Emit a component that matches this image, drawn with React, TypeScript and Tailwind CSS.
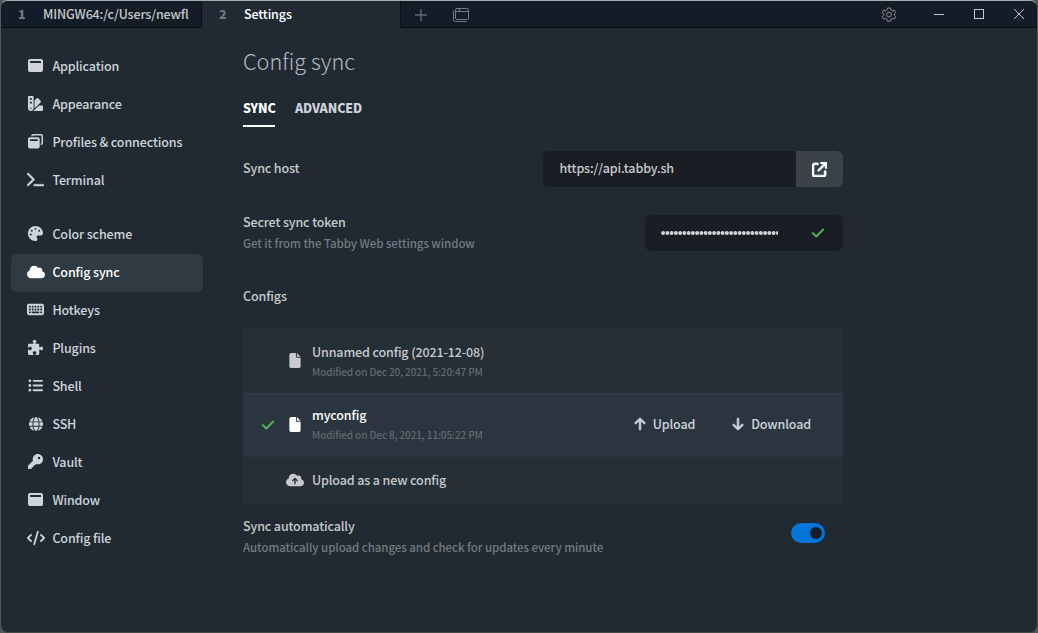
import type { ReactNode } from 'react';
import type { IconType } from 'react-icons';
import {
  FaArrowDown, FaArrowUp, FaCheck, FaCloud, FaCloudArrowUp, FaCode, FaFile, FaGlobe, FaKey, FaKeyboard,
  FaListUl, FaPalette, FaPuzzlePiece, FaSwatchbook, FaTerminal, FaArrowUpRightFromSquare,
} from 'react-icons/fa6';

const WindowIcon: IconType = ({ size = 15 }) => (
  <svg width={size} height={size} viewBox="0 0 15 15" fill="currentColor">
    <path fillRule="evenodd" d="M1.9 1h11.2A1.9 1.9 0 0 1 15 2.9v9.2a1.9 1.9 0 0 1-1.9 1.9H1.9A1.9 1.9 0 0 1 0 12.1V2.9A1.9 1.9 0 0 1 1.9 1zM2.5 3a.5.5 0 0 0-.5.5V5h11V3.5a.5.5 0 0 0-.5-.5z" />
  </svg>
);

const WindowsIcon: IconType = ({ size = 15 }) => (
  <svg width={size} height={size} viewBox="0 0 15 15" fill="currentColor">
    <path d="M5.2 0H13a2 2 0 0 1 2 2v7a2 2 0 0 1-2 2h-.3V9.5h.3a.5.5 0 0 0 .5-.5V2a.5.5 0 0 0-.5-.5H5.2a.5.5 0 0 0-.5.5v.2H3.2V2a2 2 0 0 1 2-2z" />
    <path fillRule="evenodd" d="M1.9 3.2h7.9a1.9 1.9 0 0 1 1.9 1.9v7.5a1.9 1.9 0 0 1-1.9 1.9H1.9A1.9 1.9 0 0 1 0 12.6V5.1a1.9 1.9 0 0 1 1.9-1.9zM2 5.2v1.7h7.7V5.2z" />
  </svg>
);

type Item = { label: string; icon: IconType; size: number; active?: boolean };

const general: Item[] = [
  { label: 'Application', icon: WindowIcon, size: 15 },
  { label: 'Appearance', icon: FaSwatchbook, size: 15 },
  { label: 'Profiles & connections', icon: WindowsIcon, size: 15 },
  { label: 'Terminal', icon: FaTerminal, size: 17 },
];

const tools: Item[] = [
  { label: 'Color scheme', icon: FaPalette, size: 15 },
  { label: 'Config sync', icon: FaCloud, size: 18, active: true },
  { label: 'Hotkeys', icon: FaKeyboard, size: 17 },
  { label: 'Plugins', icon: FaPuzzlePiece, size: 15 },
  { label: 'Shell', icon: FaListUl, size: 15 },
  { label: 'SSH', icon: FaGlobe, size: 14 },
  { label: 'Vault', icon: FaKey, size: 15 },
  { label: 'Window', icon: WindowIcon, size: 15 },
  { label: 'Config file', icon: FaCode, size: 18 },
];

function NavItem({ label, icon: Icon, size, active }: Item) {
  return (
    <a className={`flex h-[38px] w-48 items-center rounded-md pb-[3px] pl-4 ${active ? 'bg-[#303a42] text-white' : 'text-[#ced4da]'}`}>
      <span className="flex w-[17.4px] shrink-0 justify-center"><Icon size={size} className={`shrink-0 ${Icon === FaTerminal ? 'stroke-current stroke-[12]' : ''}`} /></span>
      <span className="ml-2">{label}</span>
    </a>
  );
}

function TitleBar() {
  return (
    <header className="flex h-[27px] shrink-0">
      <div className="flex w-[201px] items-center border-r border-b border-[#0a1015] bg-[#131d27] pl-[17px]">
        <span className="w-[25px] font-black text-[#71777d]">1</span>
        <span className="text-[#c5c8ca]">MINGW64:/c/Users/newfl</span>
      </div>
      <div className="flex w-[198px] items-center pb-px pl-[17px]">
        <span className="w-[25px] font-black text-[#71777d]">2</span>
        <span className="text-white">Settings</span>
      </div>
      <div className="flex grow items-center border-b border-l border-[#0a1015] bg-[#131d27]">
        <svg className="ml-[13px]" width="14" height="14" viewBox="0 0 14 14" stroke="#60676d" strokeWidth="1.5"><path d="M1 8h12M7 2v12" /></svg>
        <svg className="ml-[24px]" width="18" height="16" viewBox="0 0 18 16" fill="none" stroke="#747a80">
          <rect x="3.5" y="2.5" width="13" height="11" rx="1.5" /><path d="M3.5 5.5h13M7.5 2.5v3M1.5 4.5v9q0 2 2 2h11" />
        </svg>
        <svg className="ml-auto" width="16" height="16" viewBox="0 0 16 16" fill="none" stroke="#858a8e" strokeLinejoin="round">
          <path d="M6.4 2h3.2l.4 2 1.3.8 2-.7 1.5 2.5L13.3 8v1.2l1.5 1.4-1.5 2.5-2-.7-1.3.8-.4 2H6.4l-.4-2-1.3-.8-2 .7-1.5-2.5 1.5-1.4V8L1.2 6.6l1.5-2.5 2 .7L6 4z" /><circle cx="8" cy="8.6" r="2.4" />
        </svg>
        <svg className="ml-[34px]" width="16" height="16" viewBox="0 0 16 16" stroke="#c4c7c9"><path d="M3 8.5h10" /></svg>
        <svg className="ml-6" width="16" height="16" viewBox="0 0 16 16" fill="none" stroke="#c4c7c9"><rect x="3.5" y="3.5" width="9" height="9" /></svg>
        <svg className="mr-[10px] ml-6" width="16" height="16" viewBox="0 0 16 16" stroke="#c4c7c9"><path d="M3 3l10 10M13 3L3 13" /></svg>
      </div>
    </header>
  );
}

function ConfigRow({ name, date, active, children }: { name: string; date: string; active?: boolean; children?: ReactNode }) {
  return (
    <div className={`flex h-16 items-center border-t pr-8 ${active ? 'border-[#313b44] bg-[#2b353f] pb-[2px] text-white' : 'border-[#27313a] bg-[#252f38] text-[#c8cacb]'}`}>
      <span className="flex w-[43px] justify-end pr-[11px] text-[#5cb85c]">{active && <FaCheck size={14} className="stroke-current stroke-[12]" />}</span>
      <FaFile size={15} className={`w-[18px] ${active ? '' : 'mb-[2px]'}`} />
      <div className="ml-2 flex flex-col gap-[3px]">
        <span className="leading-[18px]">{name}</span>
        <span className="text-[10px] leading-4 tracking-[-0.12px] text-[#626970]">{date}</span>
      </div>
      {children}
    </div>
  );
}

export default function App() {
  return (
    <div className="h-[633px] w-[1038px] overflow-hidden bg-[#55585a]">
      <div className="flex h-full w-full flex-col overflow-hidden rounded-lg border border-t-[#a9abac] border-r-[#55585a] border-b-[#45484b] border-l-[#55585a] bg-[#212a33] font-['Noto_Sans_CJK_SC','Noto_Sans',sans-serif] text-[12.5px] leading-[18px] font-medium tracking-[-0.13px]">
        <TitleBar />
        <div className="flex grow">
          <nav className="flex w-[242px] shrink-0 flex-col gap-4 pt-[20px] pl-[10px]">
            <div>{general.map((i) => <NavItem key={i.label} {...i} />)}</div>
            <div>{tools.map((i) => <NavItem key={i.label} {...i} />)}</div>
          </nav>
          <main className="w-[600px] text-[#c8cacb]">
            <h1 className="mt-4 text-[21.7px] leading-[34px] font-light tracking-normal text-[#b5bbc1]">Config sync</h1>
            <div className="mt-[21px] flex gap-5 font-black">
              <span className="h-[28px] w-8 border-b-2 border-white text-white">SYNC</span>
              <span className="text-[#ced4da]">ADVANCED</span>
            </div>
            <div className="mt-6 flex h-9 items-center justify-between">
              <span className="pb-[2px]">Sync host</span>
              <div className="flex h-9 w-[300px] overflow-hidden rounded-md bg-[#1a1e24]">
                <span className="flex grow items-center pb-[2px] pl-[16.4px]">https://api.tabby.sh</span>
                <button className="flex w-[47px] items-center justify-center bg-[#39434c] text-white"><FaArrowUpRightFromSquare size={15} className="stroke-current stroke-[24]" /></button>
              </div>
            </div>
            <div className="mt-[26px] flex justify-between">
              <div>
                <div>Secret sync token</div>
                <div className="mt-[3px] text-[11.5px] tracking-[-0.06px] text-[#737a80]">Get it from the Tabby Web settings window</div>
              </div>
              <div className="mt-0.5 flex h-9 w-[198px] items-center justify-between rounded-md bg-[#1a1e24] pr-[18px] pl-4">
                <svg width="117" height="6" viewBox="0 0 117 6" fill="#d0d2d4">
                  {Array.from({ length: 28 }, (_, i) => <circle key={i} cx={2.1 + i * 4.25} cy="3" r="2" />)}
                </svg>
                <FaCheck size={14} className="stroke-current stroke-[12] text-[#5cb85c]" />
              </div>
            </div>
            <div className="mt-[35px]">Configs</div>
            <div className="mt-6">
              <ConfigRow name="Unnamed config (2021-12-08)" date="Modified on Dec 20, 2021, 5:20:47 PM" />
              <ConfigRow name="myconfig" date="Modified on Dec 8, 2021, 11:05:22 PM" active>
                <div className="mb-[2px] ml-auto flex gap-9 text-[#ced4da]">
                  <span className="flex items-center gap-[6px]"><FaArrowUp size={14} className="stroke-current stroke-[24]" />Upload</span>
                  <span className="flex items-center gap-[6px]"><FaArrowDown size={14} className="stroke-current stroke-[24]" />Download</span>
                </div>
              </ConfigRow>
              <div className="flex h-12 items-center bg-[#252f38] pb-[2px] pl-[43px]">
                <FaCloudArrowUp size={18} className="w-[18px]" />
                <span className="ml-2">Upload as a new config</span>
              </div>
            </div>
            <div className="mt-3 flex justify-between pr-[18px]">
              <div>
                <div>Sync automatically</div>
                <div className="mt-[3px] text-[11.5px] tracking-[-0.06px] text-[#737a80]">Automatically upload changes and check for updates every minute</div>
              </div>
              <div className="mt-[6px] flex h-5 w-[34px] items-center justify-end rounded-full bg-[#0275d8] pr-[3px]">
                <span className="size-3 rounded-full bg-[#131d27]" />
              </div>
            </div>
          </main>
        </div>
      </div>
    </div>
  );
}
